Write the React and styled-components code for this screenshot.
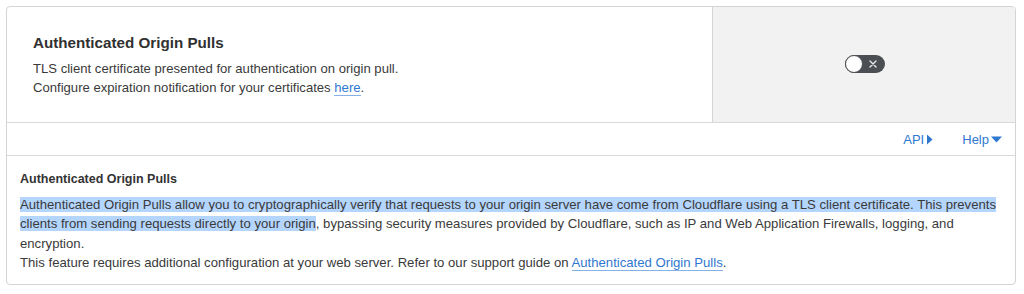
import React from "react";
import styled, { createGlobalStyle } from "styled-components";

const Global = createGlobalStyle`
  *, *::before, *::after { box-sizing: border-box; }
  html, body { margin: 0; padding: 0; background: #ffffff; }
  body { font-family: "Liberation Sans", Arial, sans-serif; color: #333; }
`;

const Page = styled.div`
  padding: 6px 8px 10px 6px;
`;

const Card = styled.section`
  border: 1px solid #d4d4d4;
  border-radius: 4px;
  background: #fff;
  overflow: hidden;
`;

const Top = styled.div`
  display: flex;
  height: 116px;
  border-bottom: 1px solid #d9d9d9;
`;

const Info = styled.div`
  flex: 1;
  padding: 25px 26px 0 26px;
`;

const Title = styled.h2`
  margin: 0 0 5px 0;
  font-size: 15.2px;
  font-weight: 700;
  color: #313131;
  line-height: 22px;
`;

const Desc = styled.p`
  margin: 0;
  font-size: 13.1px;
  line-height: 19px;
  color: #3a3a3a;
`;

const Link = styled.a`
  color: #2f78cf;
  text-decoration: none;
  border-bottom: 1px solid #86b1e6;
`;

const Control = styled.div`
  width: 303px;
  background: #f2f2f2;
  border-left: 1px solid #d4d4d4;
  display: flex;
  align-items: center;
  justify-content: center;
  padding-bottom: 2px;
  padding-left: 2px;
`;

const Switch = styled.div`
  position: relative;
  width: 40px;
  height: 18px;
  border-radius: 9px;
  background: #4b4e52;
`;

const Knob = styled.span`
  position: absolute;
  left: 0;
  top: 0;
  width: 18px;
  height: 18px;
  border-radius: 50%;
  background: #fff;
  border: 1px solid #4b4e52;
`;

const Cross = styled.svg`
  position: absolute;
  right: 8px;
  top: 5px;
`;

const Footer = styled.div`
  display: flex;
  justify-content: flex-end;
  align-items: center;
  gap: 29px;
  height: 33px;
  padding-right: 13px;
  border-bottom: 1px solid #d9d9d9;
`;

const FootLink = styled.a`
  display: inline-flex;
  align-items: center;
  gap: 2px;
  color: #2f78cf;
  font-size: 13px;
  text-decoration: none;
`;

const Body = styled.div`
  padding: 14px 13px 12px 13px;
`;

const BodyTitle = styled.h3`
  margin: 0 0 7px 0;
  font-size: 12.5px;
  font-weight: 700;
  color: #333;
  line-height: 18px;
`;

const BodyText = styled.p`
  margin: 0;
  font-size: 13.15px;
  line-height: 19.3px;
  color: #3a3a3a;
`;

const Selected = styled.span`
  background: #b4d5fd;
`;

export default function App() {
  return (
    <>
      <Global />
      <Page>
        <Card>
          <Top>
            <Info>
              <Title>Authenticated Origin Pulls</Title>
              <Desc>
                TLS client certificate presented for authentication on origin pull.
                <br />
                Configure expiration notification for your certificates <Link href="#">here</Link>.
              </Desc>
            </Info>
            <Control>
              <Switch>
                <Knob />
                <Cross width="8" height="8" viewBox="0 0 8 8">
                  <path d="M1 1L7 7M7 1L1 7" stroke="#e8e8e8" strokeWidth="1.4" strokeLinecap="round" />
                </Cross>
              </Switch>
            </Control>
          </Top>
          <Footer>
            <FootLink href="#">
              API
              <svg width="7" height="11" viewBox="0 0 7 11">
                <path d="M1 0.5L6.5 5.5L1 10.5Z" fill="#2f78cf" />
              </svg>
            </FootLink>
            <FootLink href="#">
              Help
              <svg width="11" height="7" viewBox="0 0 11 7">
                <path d="M0 0.5H11L5.5 6.5Z" fill="#2f78cf" />
              </svg>
            </FootLink>
          </Footer>
          <Body>
            <BodyTitle>Authenticated Origin Pulls</BodyTitle>
            <BodyText>
              <Selected>
                Authenticated Origin Pulls allow you to cryptographically verify that requests to your origin server have come from Cloudflare using a TLS client certificate. This prevents clients from sending requests directly to your origin
              </Selected>
              , bypassing security measures provided by Cloudflare, such as IP and Web Application Firewalls, logging, and encryption.
              <br />
              This feature requires additional configuration at your web server. Refer to our support guide on{" "}
              <Link href="#">Authenticated Origin Pulls</Link>.
            </BodyText>
          </Body>
        </Card>
      </Page>
    </>
  );
}
